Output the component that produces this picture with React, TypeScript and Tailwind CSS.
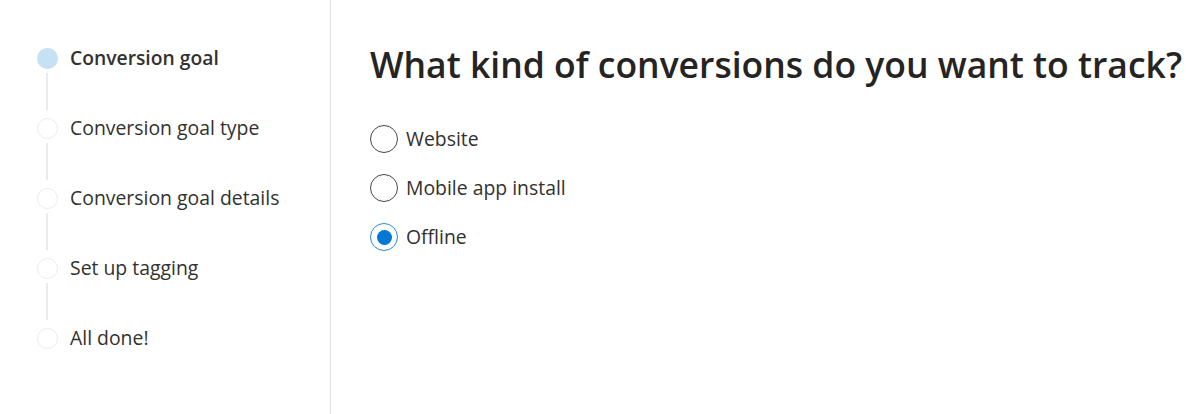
import { useState } from 'react'

const steps = [
  'Conversion goal',
  'Conversion goal type',
  'Conversion goal details',
  'Set up tagging',
  'All done!',
]

const options = ['Website', 'Mobile app install', 'Offline']

function Stepper() {
  return (
    <ol className="pt-[48px] pl-[37px]">
      {steps.map((label, i) => (
        <li key={label} className="flex flex-col">
          <div className="flex items-center gap-[12px] h-[20px]">
            {i === 0 ? (
              <span className="w-[21px] h-[21px] rounded-full bg-[#c7e0f4]" />
            ) : (
              <span className="w-[21px] h-[21px] rounded-full border-[1.5px] border-[#edebe9] bg-white" />
            )}
            <span
              className={
                i === 0
                  ? 'text-[19.3px] font-semibold text-[#323130]'
                  : 'text-[19.4px] text-[#323130]'
              }
            >
              {label}
            </span>
          </div>
          {i < steps.length - 1 && (
            <div className="ml-[9px] mt-[5px] mb-[8px] h-[37px] w-[2px] bg-[#edebe9]" />
          )}
        </li>
      ))}
    </ol>
  )
}

export default function App() {
  const [picked, setPicked] = useState('Offline')

  return (
    <div className="flex h-[414px] w-[1200px] overflow-hidden bg-white font-['Open_Sans',sans-serif] text-[#323130]">
      <aside className="w-[331px] shrink-0 border-r border-[#e1dfdd]">
        <Stepper />
      </aside>
      <main className="pl-[39px] pt-[40px]">
        <h1 className="text-[35.5px] leading-[48px] font-semibold text-[#252423] whitespace-nowrap">
          What kind of conversions do you want to track?
        </h1>
        <div className="mt-[37px] flex flex-col gap-[21px]">
          {options.map((opt) => {
            const on = picked === opt
            return (
              <label key={opt} className="flex items-center gap-[8px] h-[28px] cursor-pointer" onClick={() => setPicked(opt)}>
                <span
                  className={
                    on
                      ? 'flex items-center justify-center w-[28px] h-[28px] rounded-full border-[1.5px] border-[#2b88d8]'
                      : 'flex items-center justify-center w-[28px] h-[28px] rounded-full border-[1.5px] border-[#484644]'
                  }
                >
                  {on && <span className="w-[15px] h-[15px] rounded-full bg-[#0078d4]" />}
                </span>
                <span className="text-[19.4px]">{opt}</span>
              </label>
            )
          })}
        </div>
      </main>
    </div>
  )
}
